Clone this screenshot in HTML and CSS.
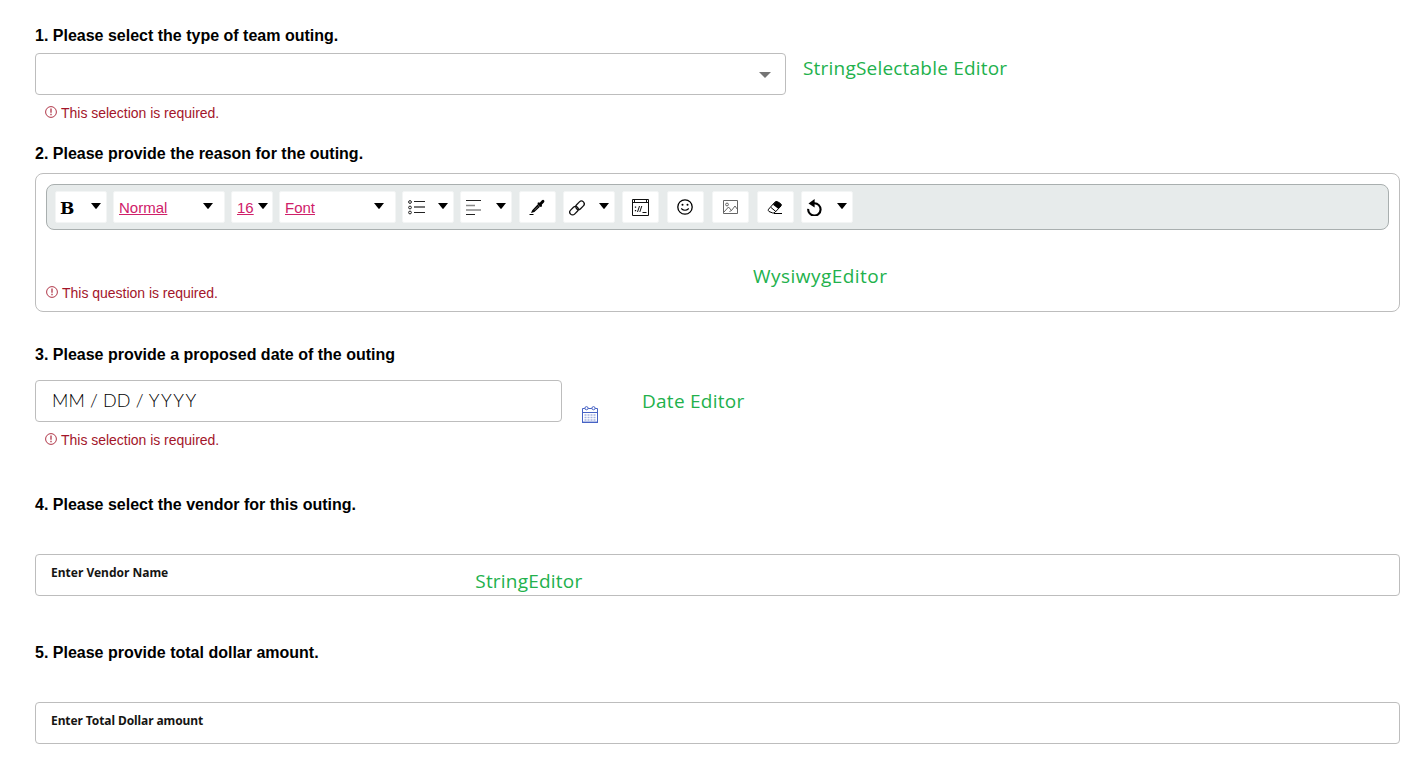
FILE: index.html
```html
<!DOCTYPE html>
<html lang="en">
<head>
<meta charset="utf-8">
<title>Team outing</title>
<link rel="stylesheet" href="styles.css">
</head>
<body>
<svg class="defs" width="0" height="0">
  <symbol id="alert" viewBox="0 0 12 12"><circle cx="6" cy="6" r="5.4" fill="none" stroke="currentColor"/><path d="M6 2.6v4.2M6 7.8v1.4" stroke="currentColor" stroke-width="1.3"/></symbol>
  <symbol id="caret" viewBox="0 0 10 6"><path d="M0 0h10L5.6 5.6Q5 6.200 4.400 5.600z"/></symbol>
</svg>
<main class="form">
  <section class="question q1">
    <h2 class="title">1. Please select the type of team outing.</h2>
    <div class="line">
      <div class="field select"><svg class="select-caret" viewBox="0 0 12 6"><path d="M0 0h12L6 6z"/></svg></div>
      <span class="note note-select">StringSelectable Editor</span>
    </div>
    <p class="error"><svg class="alert"><use href="#alert"/></svg><span>This selection is required.</span></p>
  </section>

  <section class="question q2">
    <h2 class="title">2. Please provide the reason for the outing.</h2>
    <div class="editor">
      <div class="toolbar">
        <div class="tool menu"><b class="bold">B</b><svg class="caret"><use href="#caret"/></svg></div>
        <div class="tool menu w111"><a class="link">Normal</a><svg class="caret"><use href="#caret"/></svg></div>
        <div class="tool menu w41"><a class="link">16</a><svg class="caret"><use href="#caret"/></svg></div>
        <div class="tool menu w116"><a class="link">Font</a><svg class="caret"><use href="#caret"/></svg></div>
        <div class="tool menu"><svg class="ic list" viewBox="0 0 17 15"><g fill="none" stroke="#222"><circle cx="2" cy="2" r="1.400"/><circle cx="2" cy="7.500" r="1.400"/><circle cx="2" cy="12.500" r="1.400"/><path d="M6 1.500h11M6 12.500h11"/><path d="M6 7h11" stroke="#777" stroke-width="2"/></g></svg><svg class="caret"><use href="#caret"/></svg></div>
        <div class="tool menu"><svg class="ic align" viewBox="0 0 16 16"><path d="M1 1.500h15M1 15.500h9" stroke="#222"/><path d="M1 6.500h9M1 11h15" stroke="#888" stroke-width="1.400"/></svg><svg class="caret"><use href="#caret"/></svg></div>
        <div class="tool single g8"><svg class="ic" viewBox="0 0 16 16"><path d="M2 14l1.200-2.800L8.600 5.400l2.400 2.300-5.600 5.400zM8.300 4.200l1-1 1.200.8L12.700 1.500Q14 .3 15 1.200T14.900 3.600L12.500 6l.6 1-1 1z"/><path d="M8.500 5.300l3 2.700L13 6 10.500 3.500z"/><path d="M.5 15.500h4" stroke="#000"/><path d="M5.300 11.300l3.900-3.900" stroke="#999" stroke-width=".7"/></svg></div>
        <div class="tool menu g8"><svg class="ic chain" viewBox="0 0 16 16"><g fill="none" stroke="#111" stroke-width="1.300"><rect x="6.200" y="2.500" width="9.600" height="5.600" rx="2.800" transform="rotate(-45 11 5.300)"/><rect x=".2" y="7.900" width="9.600" height="5.600" rx="2.800" transform="rotate(-45 5 10.700)"/></g></svg><svg class="caret"><use href="#caret"/></svg></div>
        <div class="tool single g8"><svg class="ic code" viewBox="0 0 17 17"><g fill="none" stroke="#111"><path d="M.5.500h16v16H.5zM.5 3.500h16M2.500 0v3M14.500 0v3"/><path d="M5.500 13l2-6M7.800 13l2-6M10.500 13.500h4"/><path d="M3.500 7.500v1.300M3.500 11v1.300" stroke-width="1.300"/></g></svg></div>
        <div class="tool single g9"><svg class="ic" viewBox="0 0 16 16"><circle cx="8" cy="8" r="7.200" fill="none" stroke="#000" stroke-width="1.300"/><circle cx="5.500" cy="5.800" r="1"/><circle cx="10.500" cy="5.800" r="1"/><path d="M4.200 9.500Q8 13 11.800 9.500" fill="none" stroke="#000" stroke-width="1.100"/></svg></div>
        <div class="tool single g9"><svg class="ic image" viewBox="0 0 15 14"><g fill="none" stroke="#555" stroke-width=".9"><path d="M.5.500h14v13H.5z"/><circle cx="4" cy="4.500" r="1.400"/><path d="M1 12l4.500-5 3 3.500L12 6l2.500 3.500M6.500 12l2-2"/></g></svg></div>
        <div class="tool single g9"><svg class="ic" viewBox="0 0 16 16"><path d="M1.500 10.300L7.800 3.200Q9 2 10.500 2.700l3 1.800Q15 5.500 14 7L8 13.300Q7 14.400 5.500 13.900L2 12.500Q.8 11.500 1.500 10.300z" fill="#fff" stroke="#000"/><path d="M6 5.800L8.300 3Q9.500 2 11 3l2.700 1.700Q15 5.800 13.800 7.200L11.200 9.800z"/><path d="M4 8.500l4.800 4M7 14.500h8" fill="none" stroke="#000"/></svg></div>
        <div class="tool menu g8"><svg class="ic undo" viewBox="0 0 15 17"><path d="M1.200 9.800A6.200 6.200 0 1 0 7.400 4.200H5" fill="none" stroke="#000" stroke-width="2.100"/><path d="M1.500 4.400L7.600 0v8.500z"/></svg><svg class="caret"><use href="#caret"/></svg></div>
      </div>
      <div class="note note-wys">WysiwygEditor</div>
      <p class="error"><svg class="alert"><use href="#alert"/></svg><span>This question is required.</span></p>
    </div>
  </section>

  <section class="question q3">
    <h2 class="title">3. Please provide a proposed date of the outing</h2>
    <div class="line">
      <div class="field date"><span class="date-text">MM / DD / <span class="year">YYYY</span></span></div>
      <svg class="calendar" viewBox="0 0 16 17"><g fill="none" stroke="#4662c4"><path d="M.5 2.500h15v14H.5zM0 6.500h16"/><path d="M0 16.300h16" stroke-width="1.400"/><circle cx="4.500" cy="2.200" r="1.600" fill="#fff"/><circle cx="11.500" cy="2.200" r="1.600" fill="#fff"/><path d="M2.500 9h11M2.500 11.500h11M2.500 14h11" stroke="#a5b3e2" stroke-width="1.500" stroke-dasharray="2 1"/></g></svg>
      <span class="note note-date">Date Editor</span>
    </div>
    <p class="error"><svg class="alert"><use href="#alert"/></svg><span>This selection is required.</span></p>
  </section>

  <section class="question q4">
    <h2 class="title">4. Please select the vendor for this outing.</h2>
    <div class="field text"><span class="hint">Enter Vendor Name</span><span class="note note-string">StringEditor</span></div>
  </section>

  <section class="question q5">
    <h2 class="title">5. Please provide total dollar amount.</h2>
    <div class="field text"><span class="hint hint-dollar">Enter Total Dollar amount</span></div>
  </section>
</main>
</body>
</html>
```
FILE: styles.css
```css
* { box-sizing: border-box; }
body { margin: 0; background: #fff; color: #000; font-family: "Liberation Sans", Arial, sans-serif; overflow: hidden; }
.defs { display: block; }
.form { width: 1400px; height: 777px; padding: 26px 0 0 35px; }
.question { display: flex; flex-direction: column; }
.title { margin: 0; font-size: 16px; line-height: 20px; font-weight: 700; white-space: nowrap; }
.line { display: flex; align-items: flex-start; }
.field { display: flex; height: 42px; border: 1px solid #bdbdbd; border-radius: 4px; }
.note { font-family: "Open Sans", sans-serif; font-size: 19px; line-height: 26px; letter-spacing: .2px; color: #22b14c; white-space: nowrap; }
.error { display: flex; margin: 0; height: 16px; padding-left: 10px; color: #a3152a; font-size: 14px; line-height: 16px; letter-spacing: -.02px; white-space: nowrap; }
.alert { width: 12px; height: 12px; margin: 1px 4px 0 0; opacity: .85; }

.q1 { height: 118px; }
.q1 .line { margin-top: 7px; }
.q1 .error { margin-top: 10px; }
.select { width: 751px; justify-content: flex-end; padding: 18px 14px 0 0; }
.select-caret { width: 12px; height: 6px; fill: #757575; }
.note-select { margin: 2px 0 0 17px; }

.q2 { height: 201px; }
.editor { height: 139px; margin-top: 9px; padding: 10px; border: 1px solid #bdbdbd; border-radius: 8px; }
.editor .error { padding-left: 0; margin-top: -4px; }
.toolbar { display: flex; height: 46px; padding: 6px 0 0 8px; border: 1px solid #a9afaf; border-radius: 8px; background: #e7ebeb; }
.tool { display: flex; flex: none; width: 52px; height: 32px; background: #fff; border: 1px solid #f3f5f5; border-radius: 2px; }
.tool + .tool { margin-left: 6px; }
.tool + .g8 { margin-left: 7px; }
.tool + .g9 { margin-left: 8px; }
.single { width: 37px; justify-content: center; align-items: center; padding-right: 1px; }
.menu { justify-content: space-between; padding: 0 5px 0 4px; }
.w111 { width: 112px; padding-right: 11px; }
.w41 { width: 42px; padding-right: 4px; }
.w116 { width: 117px; padding-right: 11px; }
.caret { width: 10px; height: 6px; margin-top: 11px; }
.link { margin: 7px 0 0 1px; font-size: 15px; line-height: 18px; color: #cf2069; text-decoration: underline; }
.ic { width: 16px; height: 16px; }
.bold { margin: 6px 0 0 0; font-family: "DejaVu Serif", serif; font-size: 17px; line-height: 20px; }
.list { width: 17px; height: 15px; margin: 8px 0 0 1px; }
.align { margin-top: 7px; }
.chain { margin: 8px 0 0 1px; }
.code { width: 17px; height: 17px; }
.image { width: 15px; height: 14px; }
.undo { width: 15px; height: 17px; margin: 7px 0 0 1px; }
.note-wys { margin: 33px 0 0 707px; letter-spacing: .46px; }

.q3 { height: 150px; }
.q3 .line { margin-top: 15px; }
.q3 .error { margin-top: 9px; }
.date { width: 527px; padding: 7px 0 0 16px; }
.date-text { font-family: Lato, sans-serif; font-weight: 300; font-size: 18px; line-height: 24px; letter-spacing: .15px; white-space: nowrap; }
.year { letter-spacing: 1.5px; }
.calendar { width: 16px; height: 17px; margin: 26px 0 0 20px; }
.note-date { margin: 8px 0 0 44px; letter-spacing: .26px; }

.q4 { height: 148px; }
.text { width: 1365px; margin-top: 39px; padding: 10px 0 0 15px; }
.hint { height: 16px; font-family: "Noto Sans", sans-serif; font-size: 12px; line-height: 16px; font-weight: 700; color: #161513; white-space: nowrap; }
.hint-dollar { letter-spacing: -.09px; }
.note-string { margin: 3px 0 0 307px; }
```
